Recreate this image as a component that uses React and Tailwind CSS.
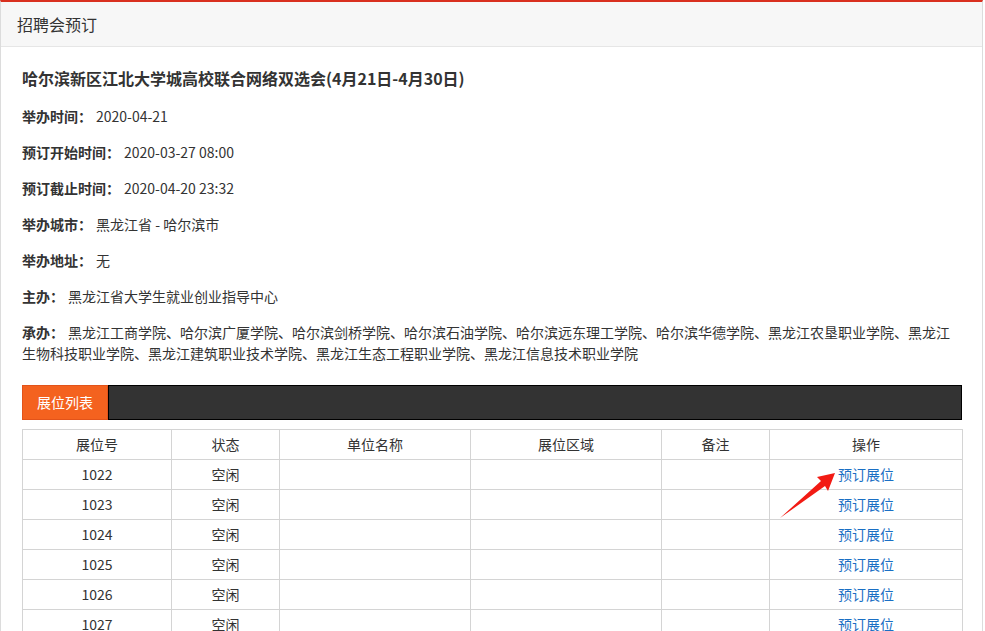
import React from "react";

const fields = [
  ["举办时间：", "2020-04-21"],
  ["预订开始时间：", "2020-03-27 08:00"],
  ["预订截止时间：", "2020-04-20 23:32"],
  ["举办城市：", "黑龙江省 - 哈尔滨市"],
  ["举办地址：", "无"],
  ["主办：", "黑龙江省大学生就业创业指导中心"],
];

const booths = ["1022", "1023", "1024", "1025", "1026", "1027", "1028", "1029"];

const cols = ["w-[149px]", "w-[108px]", "w-[191px]", "w-[191px]", "w-[108px]", "w-[193px]"];

export default function App() {
  return (
    <div
      className="w-[985px] min-h-[631px] bg-white text-[#333] text-[14px]"
      style={{ fontFamily: '"Microsoft YaHei", "Noto Sans CJK SC", sans-serif' }}
    >
      <div className="w-[983px] border-t-2 border-t-[#d9301f] border-x border-[#dcdcdc] relative">
        {/* Panel header */}
        <div className="h-[45px] bg-[#f7f7f7] border-b border-[#e6e6e6] flex items-center pl-[16px] text-[16px]">
          招聘会预订
        </div>

        {/* Panel body */}
        <div className="px-[21px] pt-[21px] pb-10">
          <h2 className="text-[16px] font-bold leading-[21px] mb-[17px]">
            哈尔滨新区江北大学城高校联合网络双选会(4月21日-4月30日)
          </h2>

          {fields.map(([label, value]) => (
            <p key={label} className="leading-[21px] mb-[15px]">
              <span className="font-bold">{label}</span>
              <span className="ml-[4px]">{value}</span>
            </p>
          ))}

          <p className="leading-[21px] mb-[21px]">
            <span className="font-bold">承办：</span>
            <span className="ml-[4px]">
              黑龙江工商学院、哈尔滨广厦学院、哈尔滨剑桥学院、哈尔滨石油学院、哈尔滨远东理工学院、哈尔滨华德学院、黑龙江农垦职业学院、黑龙江生物科技职业学院、黑龙江建筑职业技术学院、黑龙江生态工程职业学院、黑龙江信息技术职业学院
            </span>
          </p>

          {/* Tab bar */}
          <div className="flex h-[35px] w-[940px]">
            <div className="w-[86px] bg-[#f4621f] border border-[#e2531a] text-white flex items-center justify-center">
              展位列表
            </div>
            <div className="flex-1 bg-[#333] border border-black"></div>
          </div>

          {/* Booth table */}
          <div className="relative mt-[9px]">
            <table className="w-[940px] border-collapse table-fixed text-center">
              <thead>
                <tr className="h-[30px]">
                  {["展位号", "状态", "单位名称", "展位区域", "备注", "操作"].map((h, i) => (
                    <th key={h} className={`${cols[i]} border border-[#d4d4d4] font-normal`}>
                      {h}
                    </th>
                  ))}
                </tr>
              </thead>
              <tbody>
                {booths.map((b) => (
                  <tr key={b} className="h-[30px]">
                    <td className="border border-[#d4d4d4]">{b}</td>
                    <td className="border border-[#d4d4d4]">空闲</td>
                    <td className="border border-[#d4d4d4]"></td>
                    <td className="border border-[#d4d4d4]"></td>
                    <td className="border border-[#d4d4d4]"></td>
                    <td className="border border-[#d4d4d4]">
                      <a className="text-[#1a6fc4] cursor-pointer">预订展位</a>
                    </td>
                  </tr>
                ))}
              </tbody>
            </table>

            {/* Red annotation arrow */}
            <svg
              className="absolute left-[756px] top-[40px] pointer-events-none"
              width="60"
              height="52"
              viewBox="0 0 60 52"
            >
              <polygon
                points="57,4 39,8 43,12 2,49 47,17 50,22"
                fill="#f21b14"
              />
            </svg>
          </div>
        </div>
      </div>
    </div>
  );
}
